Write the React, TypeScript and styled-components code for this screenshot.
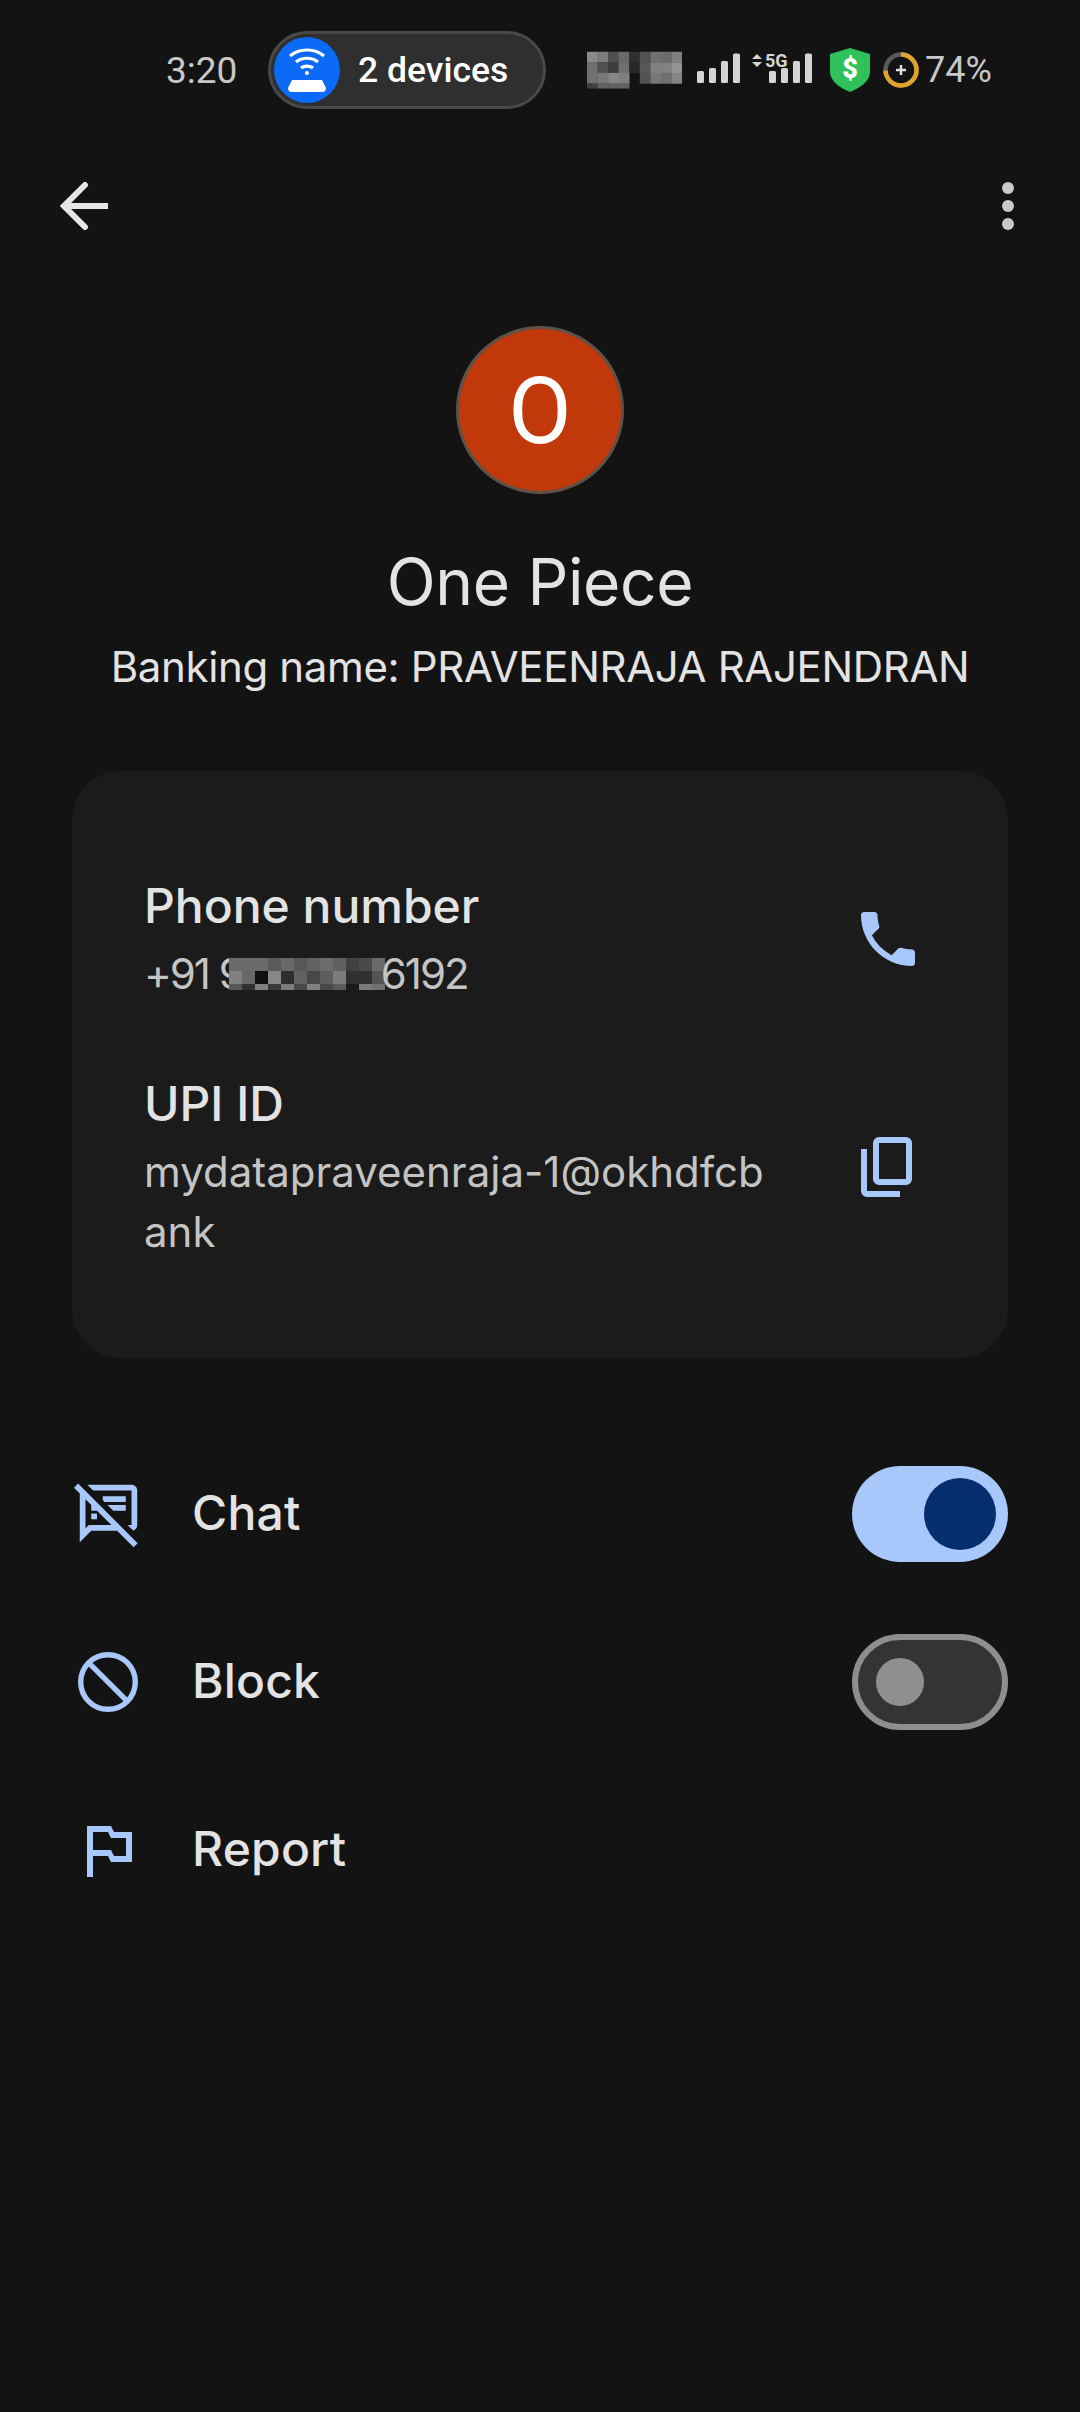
import React from "react";
import styled, { createGlobalStyle } from "styled-components";
import { MdOutlineSpeakerNotesOff, MdOutlinedFlag } from "react-icons/md";

const Global = createGlobalStyle`
  html, body { margin: 0; padding: 0; background: #131313; }
  * { box-sizing: border-box; }
`;

const Page = styled.div`
  width: 1080px;
  height: 2412px;
  overflow: hidden;
  background: #131313;
  font-family: Inter, "Liberation Sans", sans-serif;
  color: #e3e3e3;
  display: flex;
  flex-direction: column;
`;

const StatusBar = styled.div`
  height: 140px;
  padding-left: 166px;
  display: flex;
  align-items: center;
  font-family: Roboto, sans-serif;
  color: #c8c8c8;
`;
const Time = styled.span`
  font-size: 37px;
  width: 102px;
`;
const DevicePill = styled.div`
  width: 278px;
  height: 78px;
  border-radius: 39px;
  background: #2f2f2f;
  border: 3px solid #494949;
  display: flex;
  align-items: center;
  padding-left: 3px;
  gap: 18px;
  margin-right: 41px;
  color: #fff;
  font-weight: 500;
`;
const PillLabel = styled.span`
  flex: 1;
  font-size: 35.5px;
  line-height: 44px;
  white-space: nowrap;
`;
const WifiDot = styled.span`
  width: 66px;
  height: 66px;
  border-radius: 50%;
  background: #0b6bf7;
  display: flex;
  align-items: center;
  justify-content: center;
`;
const StatusIcons = styled.div`
  display: flex;
  align-items: center;
  height: 50px;
`;
const SignalIcon = styled.svg`
  display: block;
  flex: none;
  margin: -4px 18px 0 15px;
`;
const ShieldIcon = styled.svg`
  display: block;
  flex: none;
  margin-right: 13px;
`;
const Battery = styled.span`
  font-size: 36px;
  margin-left: 6px;
`;

const Toolbar = styled.div`
  height: 132px;
  padding: 0 66px 0 60px;
  display: flex;
  align-items: center;
  justify-content: space-between;
`;

const Profile = styled.div`
  margin-top: 54px;
  display: flex;
  flex-direction: column;
  align-items: center;
`;
const Avatar = styled.div`
  width: 168px;
  height: 168px;
  padding-top: 2px;
  border-radius: 50%;
  background: #c1390b;
  border: 3px solid #5f5148;
  color: #fff;
  font-family: Roboto, sans-serif;
  font-size: 92px;
  display: flex;
  align-items: center;
  justify-content: center;
`;
const Name = styled.h1`
  margin: 48px 0 0;
  font-size: 64px;
  line-height: 80px;
  font-weight: 400;
  letter-spacing: -0.35px;
  color: #e3e3e3;
`;
const Banking = styled.div`
  margin-top: 17px;
  font-size: 42px;
  line-height: 56px;
  letter-spacing: -0.35px;
  color: #e3e3e3;
`;

const Card = styled.div`
  margin: 76px 72px 72px;
  height: 587px;
  padding: 103px 84px 0 72px;
  background: #1b1b1b;
  border-radius: 48px;
  display: flex;
  flex-direction: column;
  gap: 68px;
`;
const InfoRow = styled.div`
  display: flex;
  align-items: center;
  justify-content: space-between;
`;
const InfoText = styled.div`
  width: 630px;
  display: flex;
  flex-direction: column;
  gap: 6px;
`;
const InfoTitle = styled.div`
  font-size: 48px;
  line-height: 64px;
  font-weight: 500;
  color: #e3e3e3;
`;
const InfoValue = styled.div`
  font-size: 42px;
  line-height: 60px;
  color: #c4c4c4;
  word-break: break-all;
`;
const MaskedNumber = styled.span`
  display: inline-flex;
  align-items: center;
  white-space: nowrap;
  letter-spacing: -2px;
`;
const Mosaic = styled.svg`
  display: block;
  flex: none;
`;
const PhoneMosaic = styled(Mosaic)`
  margin: 0 -4px 0 -14px;
`;

const Option = styled.div`
  height: 168px;
  padding: 0 72px;
  display: flex;
  align-items: center;
  gap: 48px;
  font-size: 48px;
  font-weight: 500;
  letter-spacing: 0.2px;
  color: #e3e3e3;
`;
const OptionLabel = styled.span`
  flex: 1;
  margin-top: -3px;
`;
const Glyph = styled.span`
  width: 72px;
  height: 72px;
  flex: none;
  color: #a8c7fa;
  display: block;
  svg { display: block; width: 72px; height: 72px; }
`;
const ChatGlyph = styled(Glyph)`
  svg { width: 69px; height: 69px; margin: 1px 0 0 2px; }
`;
const Switch = styled.div<{ $on?: boolean }>`
  width: 156px;
  height: 96px;
  border-radius: 48px;
  display: flex;
  align-items: center;
  background: ${(p) => (p.$on ? "#a8c7fa" : "#333435")};
  border: ${(p) => (p.$on ? "none" : "6px solid #8e8e8e")};
  justify-content: ${(p) => (p.$on ? "flex-end" : "flex-start")};
  padding: ${(p) => (p.$on ? "0 12px" : "0 18px")};
`;
const Thumb = styled.span<{ $on?: boolean }>`
  width: ${(p) => (p.$on ? 72 : 48)}px;
  height: ${(p) => (p.$on ? 72 : 48)}px;
  border-radius: 50%;
  background: ${(p) => (p.$on ? "#062e6f" : "#8f8f8f")};
`;

const Cells = ({ rows, cw, hs }: { rows: string[][]; cw: number; hs: number[] }) => {
  let y = 0;
  const out: React.ReactNode[] = [];
  rows.forEach((r, i) => {
    r.forEach((c, j) => {
      if (c) out.push(<rect key={`${i}-${j}`} x={j * cw} y={y} width={cw + 0.3} height={hs[i] + 0.3} fill={`#${c}${c}${c}`} />);
    });
    y += hs[i];
  });
  return <>{out}</>;
};

const statusCells = [
  ["8a", "7c", "50", "6a", "30", "52", "70", "6c", "80"],
  ["70", "50", "3e", "70", "28", "58", "80", "82", "94"],
  ["70", "78", "86", "80", "", "54", "78", "70", "84"],
  ["40", "62", "62", "62", "", "", "", "", ""],
];
const phoneCells = [
  ["6a", "6a", "6a", "5a", "68", "58", "62", "6c", "60", "40", "4a", "6a"],
  ["80", "68", "10", "88", "2e", "62", "48", "5e", "7c", "30", "30", "54"],
  ["58", "30", "80", "3a", "7c", "48", "80", "48", "5a", "1a", "7a", "70"],
];

const Bars = ({ x }: { x: number }) => (
  <g fill="#d4d4d4">
    <rect x={x} y={18} width={7} height={12} rx={1.5} />
    <rect x={x + 12} y={15} width={7} height={15} rx={1.5} />
    <rect x={x + 24} y={8} width={7} height={22} rx={1.5} />
    <rect x={x + 36} y={0.5} width={7} height={29.5} rx={1.5} />
  </g>
);

export default function App() {
  return (
    <Page>
      <Global />
      <StatusBar>
        <Time>3:20</Time>
        <DevicePill>
          <WifiDot>
            <svg width="46" height="46" viewBox="0 0 46 46" fill="none" stroke="#fff" strokeWidth="3.2">
              <path d="M6 9 C15 1 31 1 40 9" />
              <path d="M12 15 C18 10 28 10 34 15" />
              <path d="M17 21 C20 18.5 26 18.5 29 21" />
              <circle cx="23" cy="26" r="2" fill="#fff" stroke="none" />
              <path d="M8 33 H38 L42 41 Q42 45 38 45 H8 Q4 45 4 41 Z" fill="#fff" stroke="none" />
            </svg>
          </WifiDot>
          <PillLabel>2 devices</PillLabel>
        </DevicePill>
        <StatusIcons>
          <Mosaic width="95" height="38" viewBox="0 0 99 38">
            <Cells rows={statusCells} cw={11} hs={[11, 11, 11, 5]} />
          </Mosaic>
          <SignalIcon width="115" height="30" viewBox="0 0 115 30">
            <Bars x={0} />
            <Bars x={72} />
            <path d="M55 6 L60 1 L65 6 Z M55 9 L65 9 L60 14 Z" fill="#d4d4d4" />
            <text x="68" y="14" fontFamily="Roboto, sans-serif" fontWeight="700" fontSize="18" fill="#d4d4d4" stroke="#131313" strokeWidth="0.4" paintOrder="stroke">5G</text>
          </SignalIcon>
          <ShieldIcon width="40" height="44" viewBox="0 0 40 44">
            <path d="M20 0 L40 6 V24 C40 33 30 40 20 44 C10 40 0 33 0 24 V6 Z" fill="#2fc25b" />
            <text x="20" y="30" textAnchor="middle" fontFamily="Roboto, sans-serif" fontWeight="900" fontSize="27" fill="#fff">$</text>
          </ShieldIcon>
          <svg width="36" height="36" viewBox="0 0 36 36" fill="none">
            <circle cx="18" cy="18" r="15.5" stroke="#5a5a5a" strokeWidth="4.5" />
            <circle cx="18" cy="18" r="15.5" stroke="#e0a42a" strokeWidth="4.5" strokeDasharray="72 97.4" transform="rotate(-90 18 18)" />
            <path d="M13 18 H23 M18 13 V23" stroke="#e0e0e0" strokeWidth="2.4" />
          </svg>
          <Battery>74%</Battery>
        </StatusIcons>
      </StatusBar>

      <Toolbar>
        <svg width="48" height="48" viewBox="0 0 48 48" fill="none" stroke="#e6e6e6" strokeWidth="6" strokeLinecap="butt">
          <path d="M48 24 H4" />
          <path d="M25 3 L4 24 L25 45" strokeLinecap="round" />
        </svg>
        <svg width="12" height="48" viewBox="0 0 12 48" fill="#c8c8c8">
          <circle cx="6" cy="6" r="6" />
          <circle cx="6" cy="24" r="6" />
          <circle cx="6" cy="42" r="6" />
        </svg>
      </Toolbar>

      <Profile>
        <Avatar>O</Avatar>
        <Name>One Piece</Name>
        <Banking>Banking name: PRAVEENRAJA RAJENDRAN</Banking>
      </Profile>

      <Card>
        <InfoRow>
          <InfoText>
            <InfoTitle>Phone number</InfoTitle>
            <InfoValue>
              <MaskedNumber>
                +91 9
                <PhoneMosaic width="156" height="32" viewBox="0 0 156 32">
                  <Cells rows={phoneCells} cw={13} hs={[13, 13, 6]} />
                </PhoneMosaic>
                6192
              </MaskedNumber>
            </InfoValue>
          </InfoText>
          <Glyph>
            <svg viewBox="0 0 24 24" fill="currentColor">
              <path d="M6.62 10.79c1.44 2.83 3.76 5.14 6.59 6.59l2.2-2.2c.27-.27.67-.36 1.02-.24 1.12.37 2.33.57 3.57.57.55 0 1 .45 1 1V20c0 .55-.45 1-1 1-9.39 0-17-7.61-17-17 0-.55.45-1 1-1h3.5c.55 0 1 .45 1 1 0 1.25.2 2.45.57 3.57.11.35.03.74-.25 1.02l-2.2 2.2z" />
            </svg>
          </Glyph>
        </InfoRow>
        <InfoRow>
          <InfoText>
            <InfoTitle>UPI ID</InfoTitle>
            <InfoValue>mydatapraveenraja-1@okhdfcbank</InfoValue>
          </InfoText>
          <Glyph>
            <svg viewBox="0 0 24 24" fill="currentColor">
              <path d="M9 18q-.825 0-1.413-.587T7 16V4q0-.825.587-1.413T9 2h9q.825 0 1.413.587T20 4v12q0 .825-.587 1.413T18 18H9Zm0-2h9V4H9v12Zm-4 6q-.825 0-1.413-.587T3 20V6h2v14h11v2H5Z" />
            </svg>
          </Glyph>
        </InfoRow>
      </Card>

      <Option>
        <ChatGlyph><MdOutlineSpeakerNotesOff /></ChatGlyph>
        <OptionLabel>Chat</OptionLabel>
        <Switch $on><Thumb $on /></Switch>
      </Option>
      <Option>
        <Glyph>
          <svg viewBox="0 0 24 24" fill="none" stroke="currentColor" strokeWidth="1.8">
            <circle cx="12" cy="12" r="9.1" />
            <path d="M5.6 5.6 L18.4 18.4" />
          </svg>
        </Glyph>
        <OptionLabel>Block</OptionLabel>
        <Switch><Thumb /></Switch>
      </Option>
      <Option>
        <Glyph><MdOutlinedFlag /></Glyph>
        <OptionLabel>Report</OptionLabel>
      </Option>
    </Page>
  );
}
